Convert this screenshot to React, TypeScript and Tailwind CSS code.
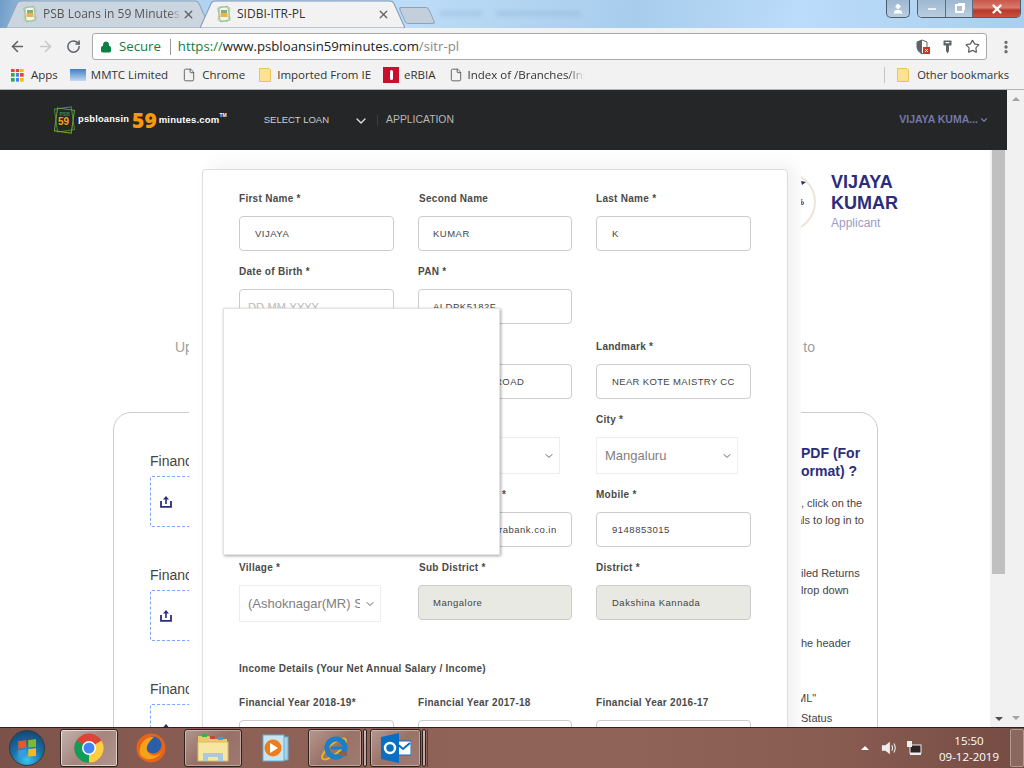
import { ChevronDown, ArrowLeft, ArrowRight, RotateCw, Star, Lock, File, EllipsisVertical, X, Minus, User } from "lucide-react";

const ui = "font-['Open_Sans','Noto_Sans',sans-serif]";
const arial = "font-['Liberation_Sans',Arial,sans-serif]";

function Favicon() {
  return (
    <svg width="16" height="18" viewBox="0 0 16 18" className="shrink-0">
      <rect x="3" y="2" width="10" height="14" rx="1" fill="#f4f7ee" stroke="#9cc09a" strokeWidth="1.2" transform="rotate(-10 8 9)" />
      <rect x="3" y="2" width="10" height="14" rx="1" fill="none" stroke="#b5d0a8" strokeWidth="1" transform="rotate(10 8 9)" />
      <rect x="5" y="5" width="6" height="3" fill="#7fae86" />
      <rect x="4.5" y="8" width="7" height="4" fill="#f2b04a" />
    </svg>
  );
}

function Tab({ title, active, width }: { title: string; active?: boolean; width: string }) {
  return (
    <div className={`relative h-[28px] shrink-0 ${width}`}>
      <svg className="absolute inset-0 h-full w-full" viewBox="0 0 200 28" preserveAspectRatio="none">
        <path
          d="M0 28 L11 3 Q12 1 15 1 L185 1 Q188 1 189 3 L200 28 Z"
          fill={active ? "#f2f2f2" : "#cbd5df"}
          stroke={active ? "#7f9ab5" : "#8ea3b8"}
        />
      </svg>
      <div className={`relative flex h-full items-center pl-[16px] pr-[15px] ${ui} text-[12px]`}>
        <Favicon />
        <span
          className={`ml-[5px] flex-1 overflow-hidden whitespace-nowrap ${
            active ? "text-[#333]" : "text-[#555] [mask-image:linear-gradient(90deg,#000_90%,transparent)]"
          }`}
        >
          {title}
        </span>
        <X size={13} strokeWidth={2.6} className="text-[#666]" />
      </div>
    </div>
  );
}

function TitleBar() {
  return (
    <div className="relative flex h-[28px] shrink-0 bg-[linear-gradient(100deg,#6f9cc6_0%,#a9cdee_4%,#bcdcf8_40%,#a8cdec_62%,#bbdcfa_78%,#a9cfee_100%)] pl-[6px]">
      <Tab title="PSB Loans in 59 Minutes:" width="w-[204px]" />
      <div className="-ml-[10px]">
        <Tab title="SIDBI-ITR-PL" active width="w-[205px]" />
      </div>
      <div className="mt-[7px] ml-[-3px] h-[17px] w-[30px] skew-x-[24deg] rounded-[3px] border border-[#8ea3b8] bg-[#c3cfdb]" />
      <div className="mt-[11px] ml-[8px] h-[5px] w-[42px] bg-[#8fb2d2]/40 blur-[2px]" />
      <div className="mt-[11px] ml-[14px] h-[5px] w-[84px] bg-[#8fb2d2]/40 blur-[2px]" />
      <div className="ml-auto flex h-[18px]">
        <div className="flex w-[24px] items-center justify-center rounded-b-[5px] border border-t-0 border-[#4d5d6d] bg-[linear-gradient(#9db8d0,#b9cde0)]">
          <User size={12} fill="#fff" className="text-white" />
        </div>
        <div className="ml-[7px] mr-[3px] flex overflow-hidden rounded-b-[5px] border border-t-0 border-[#4d5d6d]">
          <div className="flex w-[28px] items-center justify-center border-r border-[#5d6d7d] bg-[linear-gradient(#9db8d0,#b9cde0)]">
            <Minus size={12} strokeWidth={3} className="text-white" />
          </div>
          <div className="flex w-[27px] items-center justify-center border-r border-[#5d6d7d] bg-[linear-gradient(#9db8d0,#b9cde0)]">
            <div className="h-[9px] w-[9px] border-[2px] border-white shadow-[2px_-2px_0_-1px_#fff]" />
          </div>
          <div className="flex w-[47px] items-center justify-center bg-[linear-gradient(#c9574a,#d77a6c_45%,#b8382a_60%,#c9503f)]">
            <X size={14} strokeWidth={4} className="text-white" />
          </div>
        </div>
      </div>
    </div>
  );
}

function ShieldBlocked() {
  return (
    <svg width="14" height="16" viewBox="0 0 14 16">
      <path d="M6 1 L1 3 V8 C1 11 3.5 13.5 6 15 C8.5 13.5 11 11 11 8 V3 Z" fill="#fff" stroke="#5f6368" />
      <path d="M6 1 L1 3 V8 C1 11 3.5 13.5 6 15 Z" fill="#5f6368" />
      <rect x="7" y="8" width="7" height="7" fill="#d93025" />
      <path d="M9 10 L12 13 M12 10 L9 13" stroke="#fff" />
    </svg>
  );
}

function VerticalKey() {
  return (
    <svg width="9" height="14" viewBox="0 0 9 14">
      <path d="M1 0.5 H8 Q8.5 0.5 8.5 1 V5 Q8.5 5.5 8 5.5 H6 V11 L4.5 13.5 L3 11 V5.5 H1 Q0.5 5.5 0.5 5 V1 Q0.5 0.5 1 0.5 Z" fill="#5f6368" />
      <rect x="2.5" y="2" width="4" height="1.2" fill="#fff" />
    </svg>
  );
}

function Toolbar() {
  return (
    <div className="flex h-[33px] shrink-0 items-center bg-[#f2f2f2] pt-[4px]">
      <ArrowLeft size={17} strokeWidth={2.2} className="ml-[9px] text-[#5f6368]" />
      <ArrowRight size={17} strokeWidth={2.2} className="ml-[11px] text-[#c8c8c8]" />
      <RotateCw size={15} strokeWidth={2.4} className="ml-[12px] text-[#5f6368]" />
      <div className={`ml-[11px] flex h-[27px] w-[895px] items-center rounded-[3px] border border-[#a9a9a9] bg-white ${ui} text-[13.2px]`}>
        <Lock size={12} fill="#0b8043" strokeWidth={2} className="ml-[7px] text-[#0b8043]" />
        <span className="ml-[7px] text-[#0b8043]">Secure</span>
        <span className="ml-[9px] h-[16px] w-px bg-[#9a9a9a]" />
        <span className="ml-[7px] whitespace-nowrap text-[#222]">
          <span className="text-[#0b8043]">https://</span>www.psbloansin59minutes.com<span className="text-[#888]">/sitr-pl</span>
        </span>
        <div className="ml-auto flex items-center">
          <ShieldBlocked />
          <div className="ml-[13px] flex"><VerticalKey /></div>
          <Star size={15} strokeWidth={2} className="ml-[13px] mr-[6px] text-[#5f6368]" />
        </div>
      </div>
      <EllipsisVertical size={16} strokeWidth={3} className="ml-[11px] text-[#5f6368]" />
    </div>
  );
}

function AppsIcon() {
  const colors = ["#ea4335", "#ea4335", "#fbbc05", "#34a853", "#4285f4", "#ea4335", "#34a853", "#4285f4", "#fbbc05"];
  return (
    <div className="grid h-[13px] w-[13px] grid-cols-3 gap-px">
      {colors.map((c, i) => (
        <svg key={i} viewBox="0 0 4 4" className="h-full w-full">
          <rect width="4" height="4" fill={c} />
        </svg>
      ))}
    </div>
  );
}

function Folder() {
  return (
    <svg width="12" height="14" viewBox="0 0 12 14">
      <path d="M.5.5 H10 L11.5 2 V13.5 H.5 Z" fill="#fde293" stroke="#e8c45a" />
    </svg>
  );
}

function BookmarkBar() {
  return (
    <div className={`flex h-[29px] shrink-0 items-center whitespace-nowrap border-b border-[#b5b5b5] bg-[#f2f2f2] text-[11.5px] text-[#333] ${ui}`}>
      <div className="ml-[11px]"><AppsIcon /></div>
      <span className="ml-[7px]">Apps</span>
      <div className="ml-[12px] h-[12px] w-[16px] bg-[linear-gradient(#3f7fc4,#c5daf0)]" />
      <span className="ml-[5px]">MMTC Limited</span>
      <File size={14} strokeWidth={1.5} className="ml-[14px] text-[#555]" />
      <span className="ml-[6px]">Chrome</span>
      <div className="ml-[14px]"><Folder /></div>
      <span className="ml-[6px]">Imported From IE</span>
      <div className="ml-[12px] flex h-[16px] w-[16px] items-center justify-center bg-[#c8102e]">
        <div className="h-[10px] w-[3px] rounded-full bg-white" />
      </div>
      <span className="ml-[5px]">eRBIA</span>
      <File size={14} strokeWidth={1.5} className="ml-[13px] text-[#555]" />
      <span className="ml-[5px] w-[117px] overflow-hidden [mask-image:linear-gradient(90deg,#000_85%,transparent)]">Index of /Branches/Ins</span>
      <div className="ml-auto h-[16px] w-px bg-[#c4c4c4]" />
      <div className="ml-[12px]"><Folder /></div>
      <span className="ml-[8px] mr-[15px] text-[11.2px]">Other bookmarks</span>
    </div>
  );
}

function Logo() {
  return (
    <div className="flex items-center whitespace-nowrap">
      <svg width="25" height="28" viewBox="0 0 25 28" className="shrink-0">
        <rect x="4" y="2" width="17" height="23" fill="none" stroke="#4d8c2f" strokeWidth="1" transform="rotate(-8 12 14)" />
        <rect x="4" y="3" width="17" height="23" fill="none" stroke="#6aa53a" strokeWidth="1" transform="rotate(8 12 14)" />
        <text x="7.5" y="10" fontSize="5" fontWeight="700" fill="#3f8a4f">PSB</text>
        <text x="6" y="19" fontSize="10" fontWeight="700" fill="#f7a21b">59</text>
      </svg>
      <span className={`ml-[1px] text-[9.3px] font-bold tracking-[0.2px] text-white ${arial}`}>psbloansin</span>
      <span className={`ml-[3px] text-[21px] font-extrabold leading-none text-[#f7980f] ${ui}`}>59</span>
      <span className={`ml-[2px] text-[9.5px] font-bold tracking-[0.2px] text-white ${arial}`}>minutes.com</span>
      <span className="mb-[8px] text-[5px] font-bold text-white">TM</span>
    </div>
  );
}

function Header() {
  return (
    <div className={`flex h-[60px] shrink-0 items-center bg-[#252628] pl-[52px] ${arial}`}>
      <Logo />
      <span className="ml-[37px] mt-[1px] text-[9.5px] text-[#d0d0d0]">SELECT LOAN</span>
      <ChevronDown size={16} strokeWidth={2} className="ml-[24px] mt-[1px] text-[#ddd]" />
      <span className="ml-[8px] h-[11px] w-px bg-[#3d3e40]" />
      <span className="ml-[8px] mb-[1px] text-[10.4px] text-[#b8b8b8]">APPLICATION</span>
      <span className="ml-auto text-[10.5px] font-bold text-[#7478a6]">VIJAYA KUMA...</span>
      <ChevronDown size={10} strokeWidth={3} className="ml-[1px] mr-[18px] text-[#7478a6]" />
    </div>
  );
}

function UploadIcon() {
  return (
    <svg width="12" height="13" viewBox="0 0 12 13">
      <path d="M6 1 L3 4.5 H5.2 V9 H6.8 V4.5 H9 Z" fill="#2b2d7c" />
      <path d="M1 6 V11.8 H11 V6" fill="none" stroke="#2b2d7c" strokeWidth="1.8" />
    </svg>
  );
}

function UploadRow() {
  return (
    <div className="mb-[38px]">
      <div className={`text-[14px] leading-[20px] text-[#444] ${arial}`}>Financial</div>
      <div className="mt-[5px] flex h-[51px] w-[200px] items-center rounded-[2px] border border-dashed border-[#7aa7ff] pl-[9px]">
        <UploadIcon />
      </div>
    </div>
  );
}

// page behind the modal, only the edges of it are visible
function BackgroundPage() {
  return (
    <div className={`${arial}`}>
      <div className="flex h-[60px] pt-0 pl-[756px] mt-[22px]">
        <svg width="60" height="60" viewBox="0 0 60 60" className="shrink-0">
          <circle cx="30" cy="30" r="29" fill="none" stroke="#ede4da" strokeWidth="2" />
          <path d="M45 9 L50 10 L46 13 Z" fill="#2b2d7c" />
          <text x="40" y="33" fontSize="9" fontWeight="700" fill="#2b2d7c">%</text>
        </svg>
        <div className="ml-[15px]">
          <div className="text-[18px] font-bold leading-[21px] text-[#2b2d7c]">
            VIJAYA
            <br />
            KUMAR
          </div>
          <div className="text-[12px] leading-[18px] text-[#9a9cc4]">Applicant</div>
        </div>
      </div>
      <div className="mt-[105px] ml-[175px] flex w-[640px] justify-between text-[14px] leading-[20px] text-[#a0a0a0]">
        <span>Up</span>
        <span>to</span>
      </div>
      <div className="mt-[55px] ml-[113px] flex h-[400px] w-[765px] rounded-[18px] border border-[#ccc] pl-[36px] pt-[38px]">
        <div>
          <UploadRow />
          <UploadRow />
          <UploadRow />
        </div>
        <div className="ml-[451px] -mt-[7px] whitespace-nowrap">
          <div className="text-[14px] font-bold leading-[18px] text-[#2b2d7c]">
            PDF (For
            <br />
            ormat) ?
          </div>
          <div className="mt-[15px] text-[11px] leading-[17px] text-[#444]">
            , click on the
            <div className="-ml-[5px]">als to log in to</div>
          </div>
          <div className="mt-[36px] text-[11px] leading-[17px] text-[#444]">
            iled Returns
            <br />
            lrop down
          </div>
          <div className="mt-[36px] text-[11px] leading-[17px] text-[#444]">he header</div>
          <div className="mt-[38px] -ml-[4px] text-[11px] leading-[17px] text-[#444]">ML"</div>
          <div className="mt-[3px] text-[11px] leading-[17px] text-[#444]">Status</div>
        </div>
      </div>
    </div>
  );
}

function Label({ children, className = "" }: { children?: React.ReactNode; className?: string }) {
  return (
    <div className={`h-[18px] whitespace-nowrap text-[10px] font-bold leading-[20px] tracking-[0.28px] text-[#4a4a4a] ${className}`}>
      {children}
    </div>
  );
}

function Input({ value, placeholder, gray, className = "pl-[15px]" }: { value?: string; placeholder?: string; gray?: boolean; className?: string }) {
  return (
    <div
      className={`mt-[9px] flex h-[35px] items-center overflow-hidden whitespace-nowrap rounded-[4px] border border-[#ccc] pt-[2px] text-[9.5px] tracking-[0.5px] text-[#444] ${gray ? "bg-[#e9e9e3]" : "bg-white"} ${className}`}
    >
      {value ?? <span className="text-[11px] tracking-normal text-[#bbb]">{placeholder}</span>}
    </div>
  );
}

function Select({ value }: { value?: string }) {
  return (
    <div className="mt-[9px] flex h-[37px] w-[142px] items-center border border-[#eee] bg-white pl-[8px] pr-[4px] text-[13px] text-[#808080]">
      <span className="flex-1 overflow-hidden whitespace-nowrap">{value}</span>
      <ChevronDown size={12} className="ml-[4px] shrink-0 text-[#666]" />
    </div>
  );
}

function Row({ className, children }: { className?: string; children: React.ReactNode }) {
  return <div className={`grid grid-cols-[155px_154px_155px] gap-x-[24px] ${className}`}>{children}</div>;
}

function Modal() {
  return (
    <div className={`ml-[13px] mt-[19px] w-[586px] rounded-[4px] border border-[#ddd] bg-white pb-[40px] pl-[36px] pt-[19px] shadow-[8px_-4px_18px_rgba(0,0,0,0.06)] ${arial}`}>
      <Row className="mb-[11px]">
        <div><Label>First Name *</Label><Input value="VIJAYA" /></div>
        <div><Label className="pl-px">Second Name</Label><Input value="KUMAR" className="pl-[14px]" /></div>
        <div><Label>Last Name *</Label><Input value="K" /></div>
      </Row>
      <Row className="mb-[13px]">
        <div><Label>Date of Birth *</Label><Input placeholder="DD-MM-YYYY" className="pl-[8px]" /></div>
        <div><Label>PAN *</Label><Input value="ALDPK5182F" className="pl-[14px]" /></div>
        <div />
      </Row>
      <Row className="mb-[11px]">
        <div />
        <div><Label /><Input value="ROAD" className="pl-[76px]" /></div>
        <div><Label>Landmark *</Label><Input value="NEAR KOTE MAISTRY CC" className="pl-[15px] tracking-[0.35px]" /></div>
      </Row>
      <Row className="mb-[11px]">
        <div />
        <div><Label /><Select /></div>
        <div><Label>City *</Label><Select value="Mangaluru" /></div>
      </Row>
      <Row className="mb-[11px]">
        <div />
        <div><Label className="pl-[84px]">*</Label><Input value="rabank.co.in" className="pl-[80px]" /></div>
        <div><Label>Mobile *</Label><Input value="9148853015" /></div>
      </Row>
      <Row className="mb-[37px]">
        <div><Label>Village *</Label><Select value="(Ashoknagar(MR) S" /></div>
        <div><Label className="pl-px">Sub District *</Label><Input value="Mangalore" gray className="pl-[14px]" /></div>
        <div><Label>District *</Label><Input value="Dakshina Kannada" gray /></div>
      </Row>
      <Label className="mb-[16px]">Income Details (Your Net Annual Salary / Income)</Label>
      <Row>
        <div><div className="mb-px"><Label>Financial Year 2018-19*</Label></div><Input /></div>
        <div><div className="mb-px"><Label>Financial Year 2017-18</Label></div><Input /></div>
        <div><div className="mb-px"><Label>Financial Year 2016-17</Label></div><Input /></div>
      </Row>
    </div>
  );
}

function Scrollbars() {
  return (
    <div className="flex w-[17px] shrink-0 flex-col items-center bg-[#f1f1f1]">
      <div className="h-[424px] w-[13px] bg-[#c0c0c0]" />
      <div className="mt-auto mb-[6px] h-0 w-0 border-x-[4px] border-t-[4px] border-x-transparent border-t-[#505050]" />
    </div>
  );
}

function OuterScrollbar() {
  return (
    <div className="flex w-[17px] shrink-0 flex-col items-center bg-[#f1f1f1] pt-[7px] pb-[7px]">
      <div className="h-0 w-0 border-x-[4px] border-b-[4px] border-x-transparent border-b-[#a3a3a3]" />
      <div className="mt-auto h-0 w-0 border-x-[4px] border-t-[4px] border-x-transparent border-t-[#a3a3a3]" />
    </div>
  );
}

function ChromeIcon() {
  return (
    <svg width="30" height="30" viewBox="0 0 30 30">
      <circle cx="15" cy="15" r="14.5" fill="#db4437" />
      <path d="M15 15 L2.5 7.5 A14.5 14.5 0 0 0 15 29.5 Z" fill="#0f9d58" />
      <path d="M15 15 L15 29.5 A14.5 14.5 0 0 0 27.5 7.5 Z" fill="#ffcd40" />
      <circle cx="15" cy="15" r="7" fill="#fff" />
      <circle cx="15" cy="15" r="5.5" fill="#4285f4" />
    </svg>
  );
}

function FirefoxIcon() {
  return (
    <svg width="30" height="32" viewBox="0 0 30 32">
      <circle cx="15" cy="16" r="14.5" fill="#e8631a" />
      <circle cx="17" cy="13" r="8.5" fill="#2a5fa8" />
      <path d="M4 22 C8 30 24 30 28 14 C26 24 16 26 12 20 C9 16 12 10 18 5 C10 4 2 12 4 22 Z" fill="#f7a11a" />
    </svg>
  );
}

function FolderIcon() {
  return (
    <svg width="32" height="30" viewBox="0 0 32 30">
      <path d="M1 3 H12 L14 6 H30 V10 H1 Z" fill="#e9c96a" />
      <rect x="5" y="1" width="5" height="3" fill="#3cae4a" />
      <rect x="13" y="3" width="5" height="3" fill="#c24a3a" />
      <rect x="21" y="4" width="5" height="3" fill="#4a9ad6" />
      <rect x="1" y="9" width="30" height="19" fill="#f7e6a0" stroke="#d8bd66" />
      <path d="M6 28 V20 H26 V28 H21 V24 H11 V28 Z" fill="#a9c9de" />
    </svg>
  );
}

function WmpIcon() {
  return (
    <svg width="27" height="28" viewBox="0 0 27 28">
      <rect x="5" y="3" width="21" height="23" fill="#a8d2ea" stroke="#6aaed0" />
      <rect x="1" y="1" width="21" height="26" fill="#c6e4f4" stroke="#6aaed0" />
      <circle cx="11" cy="14" r="8.5" fill="#ee7d1c" />
      <path d="M8 9 L16 14 L8 19 Z" fill="#fff" />
    </svg>
  );
}

function IeIcon() {
  return (
    <svg width="32" height="32" viewBox="0 0 32 32">
      <ellipse cx="15" cy="17" rx="15" ry="5" fill="none" stroke="#e6b422" strokeWidth="2" transform="rotate(-40 15 17)" />
      <circle cx="17" cy="16" r="9" fill="none" stroke="#1a7fc8" strokeWidth="5" />
      <rect x="12" y="14.5" width="12" height="3" fill="#1a7fc8" />
      <path d="M20 20 L28 20 L28 24 L20 24 Z" fill="#8e5e54" />
    </svg>
  );
}

function OutlookIcon() {
  return (
    <svg width="30" height="30" viewBox="0 0 30 30">
      <rect x="14" y="8" width="16" height="14" fill="#fff" stroke="#0a6fc2" />
      <path d="M15 10 L22 16 L29 10" fill="none" stroke="#0a6fc2" strokeWidth="2" />
      <path d="M0 4 L18 0 V30 L0 26 Z" fill="#0a6fc2" />
      <circle cx="9" cy="15" r="5" fill="none" stroke="#fff" strokeWidth="2.4" />
    </svg>
  );
}

function StartOrb() {
  return (
    <div className="ml-[9px] flex h-[36px] w-[36px] shrink-0 items-center justify-center rounded-full border border-[#2a3a4a] bg-[radial-gradient(circle_at_50%_85%,#38c6ee,#1b6fa8_45%,#123b5e)]">
      <div className="grid h-[17px] w-[18px] -skew-y-6 grid-cols-2 gap-px">
        <svg viewBox="0 0 4 4" className="h-full w-full"><rect width="4" height="4" fill="#e8562a" /></svg>
        <svg viewBox="0 0 4 4" className="h-full w-full"><rect width="4" height="4" fill="#7db932" /></svg>
        <svg viewBox="0 0 4 4" className="h-full w-full"><rect width="4" height="4" fill="#3a9ae0" /></svg>
        <svg viewBox="0 0 4 4" className="h-full w-full"><rect width="4" height="4" fill="#f6b81f" /></svg>
      </div>
    </div>
  );
}

const tile = "flex h-[38px] items-center justify-center rounded-[3px] border border-[#2f211e] shadow-[inset_0_0_0_1px_rgba(255,255,255,0.35)] bg-[linear-gradient(135deg,rgba(255,255,255,0.34),rgba(255,255,255,0.1)_50%,rgba(255,255,255,0.16))]";
const activeTile = "flex h-[38px] items-center justify-center rounded-[3px] border border-[#2f211e] shadow-[inset_0_0_0_1px_rgba(255,255,255,0.6)] bg-[linear-gradient(135deg,rgba(255,255,255,0.55),rgba(255,255,255,0.28)_50%,rgba(255,255,255,0.36))]";

function Taskbar() {
  return (
    <div className={`flex h-[41px] shrink-0 items-center border-t border-[#2b2421] bg-[linear-gradient(90deg,#7b5249_0%,#8e6156_25%,#8f6358_60%,#8a5d52_80%,#754c43_100%)] ${ui}`}>
      <StartOrb />
      <div className={`ml-[15px] w-[58px] ${activeTile}`}><ChromeIcon /></div>
      <div className="flex w-[66px] items-center justify-center"><FirefoxIcon /></div>
      <div className={`w-[58px] ${tile}`}><FolderIcon /></div>
      <div className="flex w-[66px] items-center justify-center"><WmpIcon /></div>
      <div className={`w-[54px] ${tile}`}><IeIcon /></div>
      <div className={`ml-[1px] w-[4px] ${tile}`} />
      <div className={`ml-[3px] w-[51px] ${tile}`}><OutlookIcon /></div>
      <div className={`ml-[1px] w-[4px] ${tile}`} />
      <div className="ml-[1px] h-[38px] w-px bg-[#5a3e38]" />
      <div className="ml-auto h-0 w-0 border-x-[4px] border-b-[4px] border-x-transparent border-b-white" />
      <svg width="16" height="16" viewBox="0 0 18 16" className="ml-[12px]">
        <path d="M1 5 H5 L10 1 V15 L5 11 H1 Z" fill="#eee" />
        <path d="M12 5 Q14 8 12 11 M14.5 3 Q17.5 8 14.5 13" fill="none" stroke="#eee" strokeWidth="1.2" />
      </svg>
      <svg width="16" height="16" viewBox="0 0 16 16" className="ml-[9px]">
        <rect x="4" y="5" width="11" height="8" fill="#2b2421" stroke="#eee" />
        <rect x="1" y="1" width="5" height="6" fill="#eee" />
        <path d="M4 14 H15" stroke="#eee" strokeWidth="2" />
      </svg>
      <div className="ml-[9px] w-[76px] pt-[2px] text-center text-[11.5px] leading-[16px] text-white">
        15:50
        <br />
        09-12-2019
      </div>
      <div className="ml-[3px] h-[38px] w-[14px] rounded-[2px] border border-[#b09a94] bg-white/15" />
    </div>
  );
}

export default function App() {
  return (
    <div className="flex h-[768px] w-[1024px] flex-col overflow-hidden bg-white">
      <TitleBar />
      <Toolbar />
      <BookmarkBar />
      <div className="flex min-h-0 flex-1">
        <div className="flex min-w-0 flex-1 flex-col">
          <Header />
          <div className="flex min-h-0 flex-1">
            <div className="relative min-w-0 flex-1 overflow-hidden bg-white">
              <BackgroundPage />
              {/* modal layer covers the middle of the page */}
              <div className="absolute inset-y-0 left-[189px] w-[612px] overflow-hidden bg-white">
                <Modal />
              </div>
              {/* empty dropdown panel stuck open over the form */}
              <div className="absolute left-[223px] top-[158px] h-[247px] w-[277px] border border-[#e4e4e4] bg-white shadow-[1px_1px_3px_rgba(0,0,0,0.35)]" />
            </div>
            <Scrollbars />
          </div>
        </div>
        <OuterScrollbar />
      </div>
      <Taskbar />
    </div>
  );
}
